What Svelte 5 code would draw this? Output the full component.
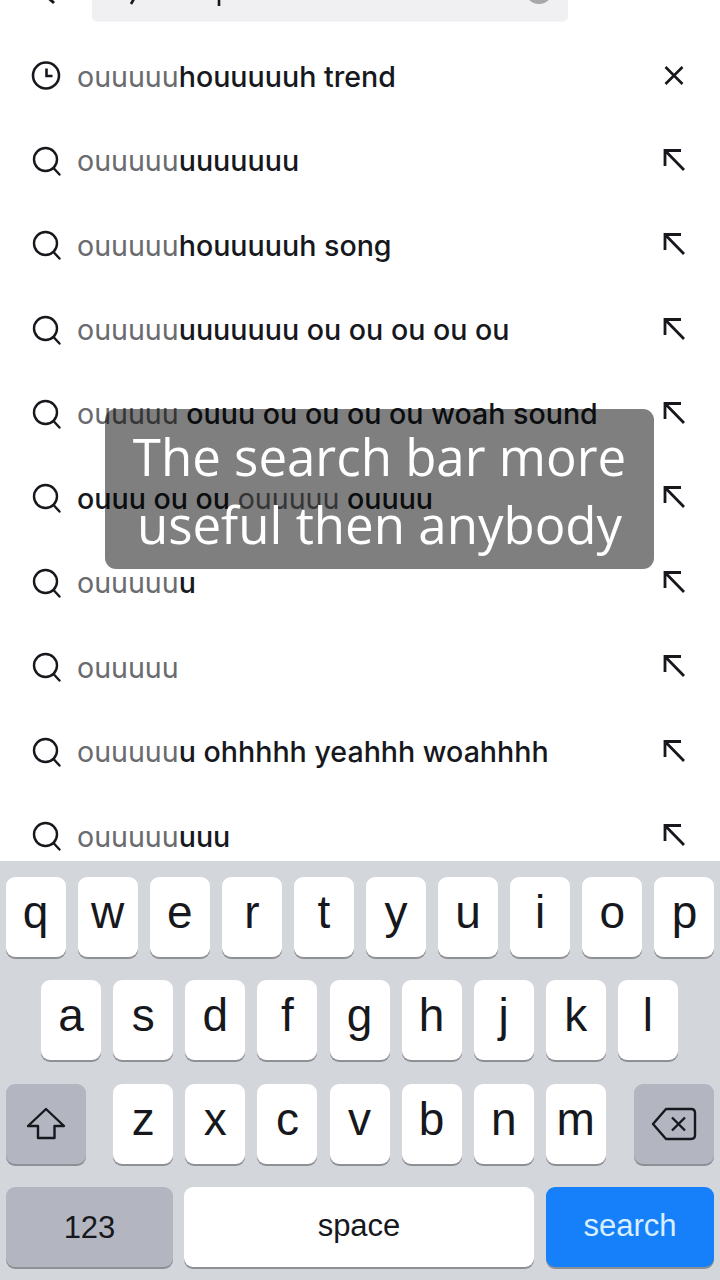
<script>
  const rows = [
    { icon: 'clock', parts: [['l', 'ouuuuu'], ['b', 'houuuuuh trend']] },
    { parts: [['l', 'ouuuuu'], ['b', 'uuuuuuu']] },
    { parts: [['l', 'ouuuuu'], ['b', 'houuuuuh song']] },
    { parts: [['l', 'ouuuuu'], ['b', 'uuuuuuu ou ou ou ou ou']] },
    { parts: [['l', 'ouuuuu'], ['b', ' ouuu ou ou ou ou woah sound']] },
    { parts: [['b', 'ouuu ou ou '], ['l', 'ouuuuu'], ['b', ' ouuuu']] },
    { parts: [['l', 'ouuuuu'], ['b', 'u']] },
    { parts: [['l', 'ouuuuu']] },
    { parts: [['l', 'ouuuuu'], ['b', 'u ohhhhh yeahhh woahhhh']] },
    { parts: [['l', 'ouuuuu'], ['b', 'uuu']] }
  ];
  const k1 = 'qwertyuiop'.split('');
  const k2 = 'asdfghjkl'.split('');
  const k3 = 'zxcvbnm'.split('');
</script>

<div class="screen">
  <header class="top">
    <svg class="back" width="24" height="10" viewBox="0 0 24 10"><path d="M4 -6 L14 3" fill="none" stroke="#16181d" stroke-width="3"/></svg>
    <div class="bar">
      <svg class="frag" width="140" height="10" viewBox="0 0 140 10" fill="none" stroke="#16181d" stroke-width="2.6">
        <path d="M43 -3 L39 4" />
        <path d="M127 -3 V6" />
      </svg>
      <span class="clear"></span>
    </div>
  </header>

  <ul class="list">
    {#each rows as row, i}
      <li class="row">
        {#if row.icon === 'clock'}
          <svg class="lead" width="32" height="32" viewBox="0 0 32 32" fill="none" stroke="#16181d" stroke-width="2.6">
            <circle cx="16" cy="15.5" r="13" />
            <path d="M16.5 8.5 V16 H22.5" stroke-width="2.6" />
          </svg>
        {:else}
          <svg class="lead" width="32" height="32" viewBox="0 0 32 32" fill="none" stroke="#16181d" stroke-width="2.4">
            <circle cx="15.5" cy="14.5" r="11.5" />
            <path d="M23.5 23 L29.5 29.5" stroke-linecap="round" />
          </svg>
        {/if}
        <span class="label">{#each row.parts as p}<span class={p[0]}>{p[1]}</span>{/each}</span>
        {#if i === 0}
          <svg class="trail" width="32" height="32" viewBox="0 0 32 32" fill="none" stroke="#16181d" stroke-width="2.6">
            <path d="M5.5 7 L22.5 24 M22.5 7 L5.5 24" />
          </svg>
        {:else}
          <svg class="trail" width="32" height="32" viewBox="0 0 32 32" fill="none" stroke="#16181d" stroke-width="2.8">
            <path d="M5 21 V5.5 H21 M5 5.5 L24 25" />
          </svg>
        {/if}
      </li>
    {/each}
  </ul>

  <div class="keyboard">
    <div class="kr">
      {#each k1 as k}<span class="key">{k}</span>{/each}
    </div>
    <div class="kr second">
      {#each k2 as k}<span class="key">{k}</span>{/each}
    </div>
    <div class="kr three">
      <span class="key fn wide">
        <svg width="40" height="36" viewBox="0 0 40 36" fill="none" stroke="#16181d" stroke-width="2.4" stroke-linejoin="round">
          <path d="M20 3 L38 20 H28.5 V32 H12 V20 H2 Z" />
        </svg>
      </span>
      <div class="mid">
        {#each k3 as k}<span class="key">{k}</span>{/each}
      </div>
      <span class="key fn wide">
        <svg width="46" height="34" viewBox="0 0 46 34" fill="none" stroke="#16181d" stroke-width="2.4" stroke-linejoin="round">
          <path d="M15 2 H40 Q44 2 44 6 V28 Q44 32 40 32 H15 L2 17 Z" />
          <path d="M21 10.5 L34 23.5 M34 10.5 L21 23.5" />
        </svg>
      </span>
    </div>
    <div class="kr four">
      <span class="key fn num">123</span>
      <span class="key sp">space</span>
      <span class="key go">search</span>
    </div>
  </div>

  <div class="caption"><span>The search bar more</span><span>useful then anybody</span></div>
</div>

<style>
  :global(body) { margin: 0; background: #fff; }
  .screen {
    position: relative;
    width: 720px;
    height: 1280px;
    overflow: hidden;
    background: #fff;
    font-family: Inter, "Liberation Sans", sans-serif;
    display: flex;
    flex-direction: column;
  }
  .top {
    flex: none;
    height: 21px;
    display: flex;
    align-items: flex-end;
    position: relative;
  }
  .back { position: absolute; left: 40px; top: 0; overflow: visible; }
  .frag { position: absolute; left: 0; top: 0; overflow: visible; }
  .bar {
    margin-left: 92px;
    width: 476px;
    height: 21px;
    background: #f0f0f2;
    border-radius: 0 0 5px 5px;
    box-shadow: 0 1px 1px rgba(0,0,0,.04);
    position: relative;
  }
  .clear {
    position: absolute;
    right: 15px;
    top: -24px;
    width: 28px;
    height: 28px;
    border-radius: 50%;
    background: #a8a8aa;
  }
  .list {
    flex: 1;
    list-style: none;
    margin: 0;
    padding: 13px 0 0;
    min-height: 0;
    overflow: hidden;
  }
  .row {
    height: 84.45px;
    display: flex;
    align-items: center;
    padding: 0 30px;
    box-sizing: border-box;
  }
  .lead { flex: none; }
  .label {
    flex: 1;
    margin-left: 15px;
    font-size: 28.6px;
    white-space: pre;
  }
  .l { color: #6a6b6e; font-weight: 400; }
  .b { color: #16181d; font-weight: 550; }
  .trail { flex: none; margin-right: -2px; }

  .keyboard {
    flex: none;
    height: 419px;
    box-sizing: border-box;
    background: #d3d6db;
    padding-top: 16px;
    display: flex;
    flex-direction: column;
    gap: 23.33px;
  }
  .kr {
    display: flex;
    justify-content: center;
    gap: 12.1px;
    height: 80px;
  }
  .second { padding-right: 1px; }
  .three { justify-content: space-between; padding: 0 6px; }
  .mid { display: flex; gap: 12.1px; margin-left: -1px; }
  .four { justify-content: flex-start; padding: 0 6px; gap: 11px; }
  .key {
    width: 60px;
    height: 80px;
    background: #fff;
    border-radius: 9px;
    box-shadow: 0 2px 0 #8e9096;
    display: flex;
    align-items: center;
    justify-content: center;
    color: #16181d;
    font-family: "Liberation Sans", Arial, sans-serif;
    font-size: 46px;
    padding-bottom: 10px;
    box-sizing: border-box;
  }
  .fn { background: #b3b6c0; }
  .wide { width: 80px; padding-bottom: 0; }
  .num { width: 167px; font-size: 31px; padding-bottom: 0; padding-top: 2px; }
  .sp { width: 350px; font-size: 31px; padding-bottom: 2px; }
  .go { width: 168px; margin-left: 1px; font-size: 31px; background: #1580f9; color: #d9efff; padding-bottom: 2px; }

  .caption {
    position: absolute;
    left: 105px;
    top: 409px;
    width: 549px;
    height: 160px;
    box-sizing: border-box;
    padding-top: 13px;
    border-radius: 11px;
    background: rgba(0, 0, 0, 0.5);
    color: #fff;
    font-family: "Open Sans", Lato, sans-serif;
    font-size: 51px;
    font-weight: 500;
    line-height: 68px;
    text-align: center;
    display: flex;
    flex-direction: column;
  }
</style>
